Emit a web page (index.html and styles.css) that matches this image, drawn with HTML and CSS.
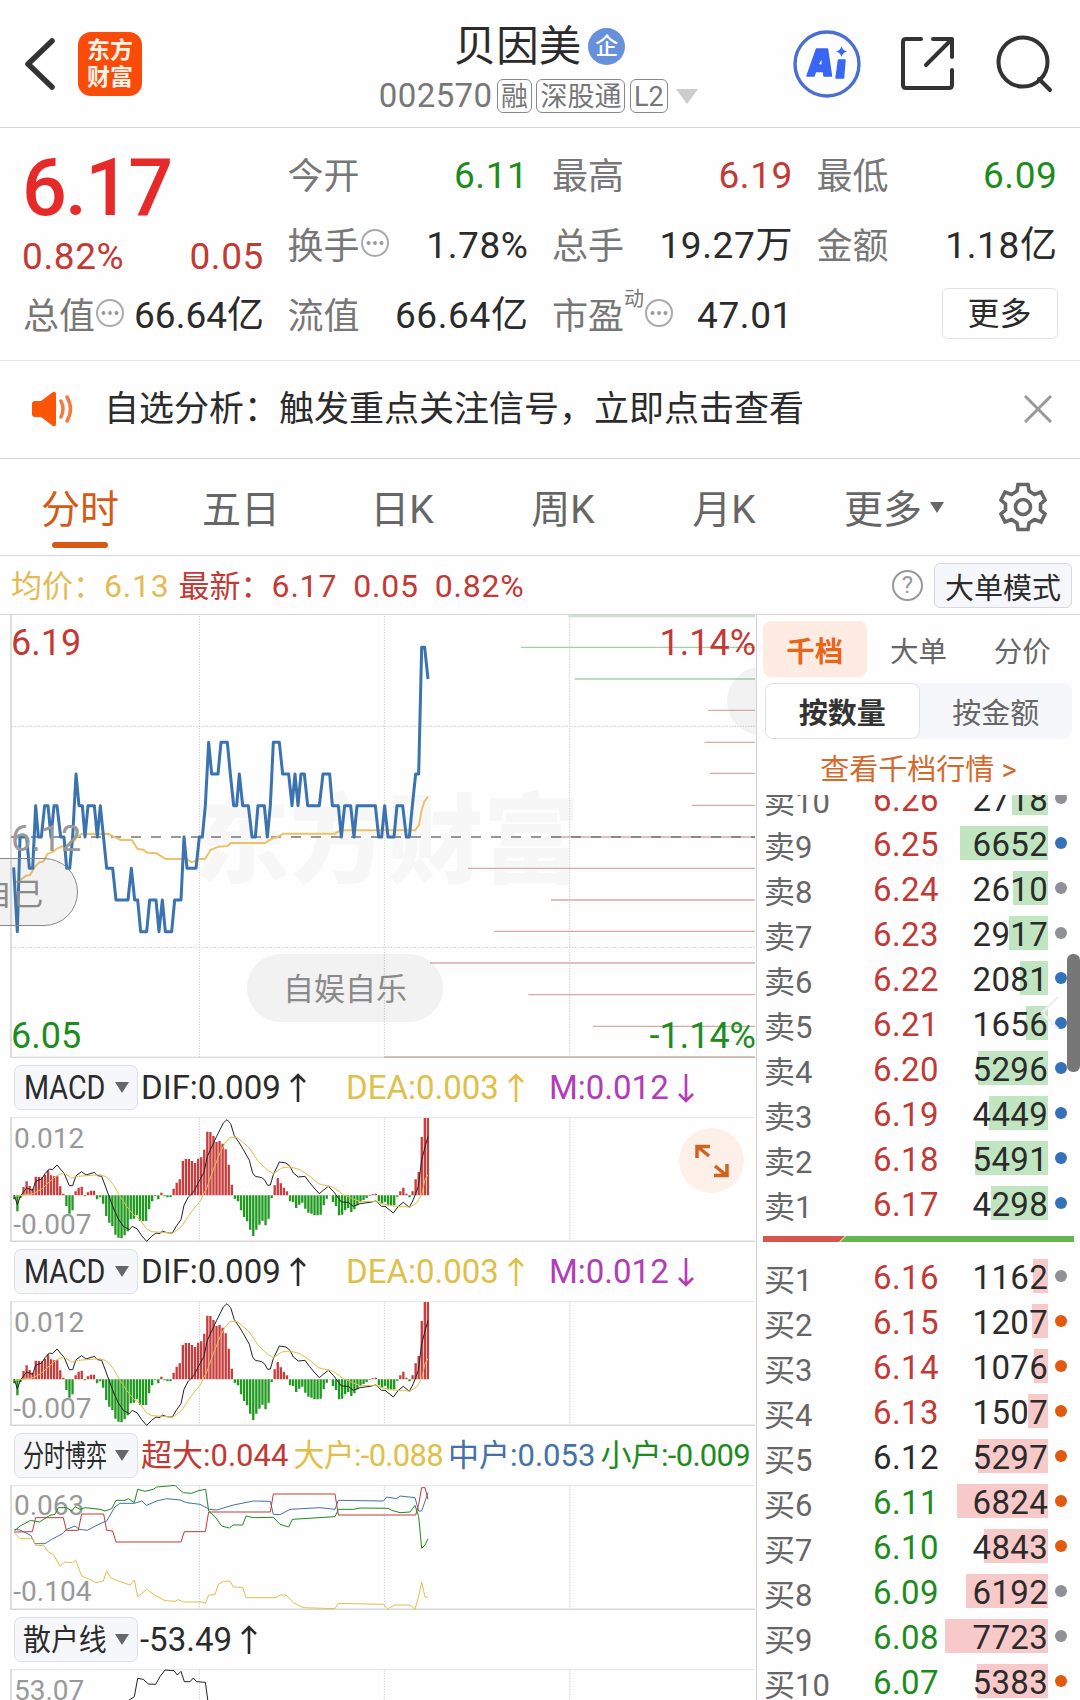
FILE: index.html
```html
<!DOCTYPE html>
<html lang="zh-CN">
<head>
    <meta charset="UTF-8">
    <meta name="viewport" content="width=device-width, initial-scale=1.0">
    <title>贝因美 002570</title>
    <link rel="stylesheet" href="styles.css">
</head>
<body>
    <header class="header">
        <div class="header-side">
            <svg class="back" width="32" height="54" viewBox="0 0 32 54"><path d="M28 4L4 27L28 50" /></svg>
            <div class="logo"><span>东方</span><span>财富</span></div>
        </div>
        <div class="header-title">
            <div class="stock-name">贝因美<span class="badge">企</span></div>
            <div class="stock-code">
                <span class="code">002570</span>
                <span class="tag">融</span>
                <span class="tag">深股通</span>
                <span class="tag">L2</span>
                <span class="tri tri-light"></span>
            </div>
        </div>
        <div class="header-side header-icons">
            <svg width="68" height="68" viewBox="0 0 68 68">
                <circle cx="34" cy="34" r="32" fill="none" stroke="#4a6fd0" stroke-width="3.4" />
                <path d="M14 46L23.500 19H34.500L38.500 46H31L30.500 41.500H22.500L21 46ZM25 35H29.500L28.800 27Z" fill="#3a66f5" fill-rule="evenodd" stroke="#3a66f5" stroke-width="1.500" stroke-linejoin="round" />
                <path d="M45.500 30H52L50.500 48H43Z" fill="#3a66f5" stroke="#3a66f5" stroke-width="1.500" stroke-linejoin="round" />
                <path d="M48.500 16Q49.500 20.500 54 21.500Q49.500 22.500 48.500 27Q47.500 22.500 43 21.500Q47.500 20.500 48.500 16Z" fill="#3a66f5" />
            </svg>
            <svg class="line-icon" width="56" height="56" viewBox="0 0 56 56">
                <path d="M21 3H6Q3 3 3 6V49Q3 52 6 52H49Q52 52 52 49V34M33 3H52V21M52 3L26 29" />
            </svg>
            <svg class="line-icon search" width="58" height="58" viewBox="0 0 58 58">
                <circle cx="27" cy="27" r="24.500" /><path d="M43 44L54 55" />
            </svg>
        </div>
    </header>

    <section class="quote">
        <div class="price">6.17</div>
        <div class="cell"><label>今开</label><b class="green">6.11</b></div>
        <div class="cell"><label>最高</label><b class="red">6.19</b></div>
        <div class="cell"><label>最低</label><b class="green">6.09</b></div>
        <div class="cell change"><b class="red">0.82%</b><b class="red">0.05</b></div>
        <div class="cell"><label>换手<i class="more-dot"></i></label><b>1.78%</b></div>
        <div class="cell"><label>总手</label><b>19.27万</b></div>
        <div class="cell"><label>金额</label><b>1.18亿</b></div>
        <div class="cell"><label>总值<i class="more-dot"></i></label><b class="tight">66.64亿</b></div>
        <div class="cell"><label>流值</label><b>66.64亿</b></div>
        <div class="cell"><label>市盈<sup>动</sup><i class="more-dot"></i></label><b>47.01</b></div>
        <div class="cell"><button class="more-btn">更多</button></div>
    </section>

    <section class="notice">
        <svg width="44" height="38" viewBox="0 0 44 38">
            <path d="M1 14Q1 11 4 11H10L22 2Q25 1 25 4V34Q25 37 22 36L10 27H4Q1 27 1 24Z" fill="#fb5607" />
            <path d="M30 11Q34 19 30 27M36 7Q43 19 36 31" fill="none" stroke="#f07b3f" stroke-width="3.500" stroke-linecap="round" />
        </svg>
        <p>自选分析：触发重点关注信号，立即点击查看</p>
        <svg class="close" width="28" height="28" viewBox="0 0 28 28"><path d="M1 1L27 27M27 1L1 27" /></svg>
    </section>

    <nav class="tabs">
        <a class="tab active">分时</a>
        <a class="tab">五日</a>
        <a class="tab">日K</a>
        <a class="tab">周K</a>
        <a class="tab">月K</a>
        <a class="tab tab-more">更多<span class="tri"></span></a>
        <span class="gear">
            <svg width="48" height="50" viewBox="0 0 48 50">
                <path d="M19 2.500H29L30 9L35.500 12.500L42 10L46 18L41.500 22V28L46 32L42 40L35.500 37.500L30 41L29 47.500H19L18 41L12.500 37.500L6 40L2 32L6.500 28V22L2 18L6 10L12.500 12.500L18 9Z" />
                <circle cx="24" cy="25" r="7.500" />
            </svg>
        </span>
    </nav>

    <section class="summary">
        <span class="avg">均价：<em>6.13</em></span>
        <span class="last">最新：<em>6.17</em><em>0.05</em><em>0.82%</em></span>
        <span class="help">?</span>
        <button class="mode-btn">大单模式</button>
    </section>

    <main class="main">
        <div class="charts">
            <div class="price-chart">
                <svg width="756" height="443" viewBox="0 15 2268 1329">
                    <text class="watermark" x="580" y="795" textLength="1160">东方财富</text>
                    <g class="grid">
                        <path d="M598 18V1342M1153 18V1342M1709 18V1342M36 349H2265M36 1012H2265" />
                    </g>
                    <path class="frame" d="M33 15V1343H2265" />
                    <g class="depth-up">
                        <path d="M1563 112H2265M1724 207H2265" />
                        <path class="thick" d="M1705 18H2265" />
                    </g>
                    <g class="depth-down">
                        <path d="M2124 301H2265M2114 397H2265M2130 490H2265M2075 586H2265M1653 681H2265M1404 775H2265M1653 870H2265M1483 964H2265M1290 1059H2265M1585 1154H2265M1779 1249H2265" />
                        <path class="thick" d="M1153 1342H2265" />
                    </g>
                    <path class="mid" d="M33 681H2265" />
                    <polyline class="line-avg" points="60,810 68,805 78,797 90,795 105,770 118,757 130,755 142,732 160,725 172,715 190,708 208,706 220,695 232,680 245,672 325,671 340,680 362,690 395,690 413,717 430,719 442,728 470,730 497,747 560,747 575,757 598,747 615,747 632,720 655,710 683,708 692,699 795,699 815,686 832,681 850,671 1005,671 1020,661 1245,661 1257,645 1265,600 1273,575 1284,560" />
                    <polyline class="line-price" points="41,772 52,965 60,681 80,681 88,775 98,775 107,587 115,681 124,681 134,587 144,587 153,681 162,587 171,587 182,681 192,681 200,775 209,775 218,681 228,492 237,587 247,587 255,681 264,587 283,587 292,681 301,587 320,775 338,775 348,870 384,870 394,775 404,870 413,870 422,965 440,965 449,870 468,870 477,965 487,870 496,965 515,965 524,870 543,870 552,681 561,775 588,775 598,681 607,681 616,587 626,397 635,492 654,492 663,397 682,397 691,492 701,587 710,587 718,492 728,587 745,587 756,681 766,681 774,587 793,587 802,681 811,587 820,397 838,397 848,492 866,492 876,587 885,492 894,587 903,492 913,492 923,587 958,587 969,492 989,492 997,587 1015,587 1024,681 1034,587 1052,587 1062,681 1071,587 1126,587 1136,681 1145,681 1154,587 1164,681 1182,681 1191,587 1208,587 1219,681 1228,681 1237,587 1247,492 1256,492 1265,112 1274,112 1284,207" />
                    <text class="axis red" x="33" y="135">6.19</text>
                    <text class="axis gray" x="33" y="722">6.12</text>
                    <text class="axis green" x="33" y="1313">6.05</text>
                    <text class="axis red end" x="2268" y="135">1.14%</text>
                    <text class="axis green end" x="2268" y="1313">-1.14%</text>
                </svg>
                <span class="bubble bubble-left">自己</span>
                <span class="bubble bubble-mid">自娱自乐</span>
                <span class="bubble bubble-right"></span>
            </div>

            <div class="indicator">
                <div class="indicator-bar">
                    <button class="select"><span class="latin">MACD</span><i class="tri"></i></button>
                    <span class="val dif">DIF:0.009<svg class="arrow" viewBox="0 0 16 30"><path d="M8 29V2M1 9L8 2L15 9" /></svg></span>
                    <span class="val dea">DEA:0.003<svg class="arrow" viewBox="0 0 16 30"><path d="M8 29V2M1 9L8 2L15 9" /></svg></span>
                    <span class="val m">M:0.012<svg class="arrow" viewBox="0 0 16 30"><path d="M8 1V28M1 21L8 28L15 21" /></svg></span>
                </div>
                <svg class="plot macd" width="756" height="125" viewBox="0 172 2268 375"></svg>
                <span class="expand">
                    <svg width="34" height="34" viewBox="0 0 34 34"><path d="M2 14V2.500H15M3 3L14 12M32 20V31.500H19M31 31L20 22" /></svg>
                </span>
            </div>

            <div class="indicator">
                <div class="indicator-bar">
                    <button class="select"><span class="latin">MACD</span><i class="tri"></i></button>
                    <span class="val dif">DIF:0.009<svg class="arrow" viewBox="0 0 16 30"><path d="M8 29V2M1 9L8 2L15 9" /></svg></span>
                    <span class="val dea">DEA:0.003<svg class="arrow" viewBox="0 0 16 30"><path d="M8 29V2M1 9L8 2L15 9" /></svg></span>
                    <span class="val m">M:0.012<svg class="arrow" viewBox="0 0 16 30"><path d="M8 1V28M1 21L8 28L15 21" /></svg></span>
                </div>
                <svg class="plot macd" width="756" height="125" viewBox="0 172 2268 375"></svg>
            </div>

            <div class="indicator">
                <div class="indicator-bar game">
                    <button class="select"><span class="four">分时博弈</span><i class="tri"></i></button>
                    <span class="red">超大:0.044</span>
                    <span class="dea minus">大户:-0.088</span>
                    <span class="blue">中户:0.053</span>
                    <span class="green minus">小户:-0.009</span>
                </div>
                <svg class="plot" width="756" height="125" viewBox="0 167 2268 375">
                    <path class="grid" d="M598 170V540M1153 170V540M1709 170V540" />
                    <path class="frame-top" d="M33 168H2265" />
                    <path class="frame" d="M33 168V540H2265" />
                    <text class="scale" x="42" y="258">0.063</text>
                    <text class="scale" x="40" y="516">-0.104</text>
                    <polyline class="thin s-blue" points="43,300 60,302 92,318 105,343 135,343 155,330 188,313 200,300 225,290 238,300 262,303 300,283 320,275 345,232 360,222 403,222 425,215 440,228 470,215 500,208 540,212 560,220 600,225 628,240 650,242 700,227 760,215 811,216 820,255 840,256 870,240 960,235 1005,240 1015,213 1150,215 1160,203 1190,208 1200,200 1245,205 1256,245 1265,245 1284,190" />
                    <polyline class="thin s-yellow" points="43,310 60,328 98,328 107,348 132,349 145,368 160,375 180,410 195,398 218,400 227,392 245,440 265,448 288,460 310,455 320,425 332,445 355,455 390,467 403,452 413,502 440,480 465,498 495,514 525,516 535,511 550,518 605,518 616,522 626,497 645,496 655,465 670,456 690,455 700,473 728,474 738,505 830,505 840,497 858,497 880,520 910,535 1005,538 1015,522 1150,525 1163,538 1185,527 1230,527 1245,540 1256,500 1265,458 1275,503 1284,504" />
                    <polyline class="thin s-red" points="43,308 97,307 107,265 190,265 199,303 235,303 245,254 311,254 320,303 338,305 348,338 543,338 553,307 616,307 626,248 811,248 820,194 1005,194 1015,257 1247,257 1256,225 1265,175 1275,175 1284,210" />
                    <polyline class="thin s-green" points="43,305 60,290 92,273 118,278 150,258 165,255 175,235 200,235 215,245 225,232 240,240 255,235 300,240 315,245 335,238 348,213 375,213 385,208 403,220 413,180 435,186 460,180 470,173 525,168 535,178 550,190 575,192 595,184 617,180 626,245 645,262 665,290 688,296 700,287 728,287 738,260 760,265 820,264 840,285 866,293 877,270 1005,262 1015,240 1060,240 1080,236 1165,237 1175,243 1200,250 1230,248 1245,228 1256,262 1265,357 1275,347 1284,328" />
                </svg>
            </div>

            <div class="indicator">
                <div class="indicator-bar">
                    <button class="select"><span class="three">散户线</span><i class="tri"></i></button>
                    <span class="val retail">-53.49<svg class="arrow" viewBox="0 0 16 30"><path d="M8 29V2M1 9L8 2L15 9" /></svg></span>
                </div>
                <svg class="plot" width="756" height="125" viewBox="0 717 2268 375">
                    <path class="grid" d="M598 720V1090M1153 720V1090M1709 720V1090" />
                    <path class="frame-top" d="M33 718H2265" />
                    <path class="frame" d="M33 718V1090H2265" />
                    <polyline class="thin s-black" points="380,815 403,800 413,745 430,748 445,762 467,763 480,740 495,720 522,722 532,735 543,724 553,755 570,755 580,744 590,755 616,757 624,815" />
                    <text class="scale" x="42" y="811">53.07</text>
                </svg>
            </div>
        </div>

        <aside class="book">
            <div class="book-tabs">
                <a class="active">千档</a>
                <a>大单</a>
                <a>分价</a>
            </div>
            <div class="segment">
                <a class="active">按数量</a>
                <a>按金额</a>
            </div>
            <a class="book-link">查看千档行情 &gt;</a>
            <div class="book-list">
                <div id="sell"></div>
                <svg class="ratio" width="311" height="6" viewBox="0 0 311 6">
                    <path d="M0 0H82L76 6H0Z" fill="#d9534f" />
                    <path d="M83 0H311V6H77Z" fill="#65b550" />
                </svg>
                <div id="buy"></div>
            </div>
            <svg class="chevron" width="20" height="36" viewBox="0 0 20 36"><path d="M18 2L2 18L18 34" /></svg>
            <span class="thumb"></span>
        </aside>
    </main>
    <script src="charts.js"></script>
</body>
</html>
```

FILE: styles.css
```css
* {
    box-sizing: border-box;
}
body {
    margin: 0;
    width: 1080px;
    height: 1700px;
    overflow: hidden;
    background-color: #fefefe;
    color: #2b2b2b;
    font-family: Roboto, "Noto Sans CJK SC", sans-serif;
    line-height: 1.2;
}
button {
    font-family: inherit;
    color: inherit;
    padding: 0;
}
b, em, i {
    font-weight: normal;
    font-style: normal;
}
.red { color: #c23a35; fill: #c23a35; }
.green { color: #1d8c1d; fill: #1d8c1d; }
.blue { color: #4472a4; }
.tri {
    display: inline-block;
    border: 7px solid transparent;
    border-top: 11px solid #666;
    border-bottom: 0;
}

/* header */
.header {
    display: flex;
    justify-content: space-between;
    height: 128px;
    border-bottom: 1px solid #d2d2d2;
    padding: 0 26px 0 24px;
}
.header-side {
    display: flex;
    align-items: center;
    width: 300px;
}
.header-icons {
    justify-content: flex-end;
    gap: 39px;
}
.search {
    margin-left: 1px;
}
.back {
    fill: none;
    stroke: #333;
    stroke-width: 5.500;
    stroke-linecap: round;
    stroke-linejoin: round;
}
.logo {
    display: flex;
    flex-direction: column;
    justify-content: center;
    width: 64px;
    height: 64px;
    margin-left: 22px;
    border-radius: 13px;
    background-color: #fa4b08;
    color: #fff3ea;
    font-size: 23px;
    font-weight: 700;
    line-height: 27px;
    text-align: center;
}
.header-title {
    display: flex;
    flex-direction: column;
    align-items: center;
    padding-top: 21px;
}
.stock-name {
    display: flex;
    align-items: center;
    height: 50px;
    padding-left: 1px;
    font-size: 42.500px;
}
.badge {
    width: 37px;
    height: 37px;
    margin-left: 7px;
    border-radius: 50%;
    background-color: #668fdc;
    color: #fff;
    font-size: 23px;
    font-weight: 500;
    line-height: 38px;
    text-align: center;
}
.stock-code {
    display: flex;
    align-items: center;
    gap: 4.500px;
    height: 50px;
    margin-left: -1px;
    color: #777;
}
.code {
    font-size: 33px;
    letter-spacing: 0.4px;
}
.tag {
    height: 34px;
    padding: 0 3px;
    border: 1.500px solid #888;
    border-radius: 6px;
    font-size: 27px;
    line-height: 34px;
}
.tri-light {
    margin-left: 4px;
    border-width: 11px;
    border-top: 15px solid #ccc;
    border-bottom: 0;
}
.line-icon {
    fill: none;
    stroke: #333;
    stroke-width: 4;
    stroke-linecap: round;
    stroke-linejoin: round;
}

/* quote */
.quote {
    display: grid;
    grid-template-columns: repeat(4, 241px);
    grid-template-rows: 70px 70px 70px;
    column-gap: 23.500px;
    height: 233px;
    padding: 13px 0 0 23px;
    border-bottom: 1px solid #e6e6e6;
}
.price {
    color: #e62a2a;
    font-size: 79px;
    font-weight: 500;
    line-height: 94px;
    margin-left: -1px;
    letter-spacing: -1.800px;
}
.cell {
    display: flex;
    justify-content: space-between;
    align-items: center;
    white-space: nowrap;
    font-size: 37px;
}
.cell b {
    letter-spacing: 0.6px;
}
.cell .tight {
    letter-spacing: 0;
}
.cell label {
    display: flex;
    align-items: center;
    padding-top: 3px;
    color: #777;
    font-size: 36px;
}
.cell sup {
    align-self: flex-start;
    margin-top: -7px;
    font-size: 20px;
    line-height: 20px;
}
.change {
    padding-top: 22px;
}
.change b {
    margin-left: -1px;
}
.more-dot {
    width: 28px;
    height: 28px;
    margin-left: 1px;
    margin-top: -9px;
    border: 2px solid #aaa;
    border-radius: 50%;
    background: radial-gradient(circle, #999 1.600px, transparent 2.200px) 50% 50% / 6.500px 24px repeat-x content-box;
    padding: 0 2px;
}
.more-btn {
    width: 116px;
    height: 51px;
    margin: -5px 0 0 auto;
    border: 1.500px solid #e2e2e2;
    border-radius: 6px;
    background-color: #fff;
    font-size: 32px;
    line-height: 50px;
}

/* notice */
.notice {
    display: flex;
    align-items: center;
    height: 98px;
    padding: 0 28px 2px 31px;
    border-bottom: 1px solid #d6d6d6;
}
.notice p {
    flex: 1;
    margin: 3px 0 0 29px;
    font-size: 35px;
}
.close {
    fill: none;
    stroke: #999;
    stroke-width: 3;
}

/* tabs */
.tabs {
    display: flex;
    height: 97px;
    border-bottom: 1px solid #d6d6d6;
    color: #666;
    font-size: 39px;
}
.tab {
    position: relative;
    width: 161px;
    padding-right: 1px;
    line-height: 102px;
    text-align: center;
}
.tab.active {
    color: #d45a16;
}
.tab.active::after {
    content: "";
    position: absolute;
    left: 52px;
    bottom: 7px;
    width: 56px;
    height: 6px;
    border-radius: 3px;
    background-color: #d45a16;
}
.tab-more {
    width: 178px;
    padding: 0;
}
.tab-more .tri {
    margin: 0 0 10px 8px;
}
.gear {
    display: flex;
    align-items: center;
    margin-left: 16px;
}
.gear svg {
    fill: none;
    stroke: #666;
    stroke-width: 3.600;
}

/* summary */
.summary {
    display: flex;
    align-items: center;
    height: 59px;
    padding: 0 8px 0 11px;
    border-bottom: 1px solid #d6d6d6;
    font-size: 31px;
}
.avg, .last {
    padding-top: 2px;
}
.summary em {
    font-size: 32px;
    letter-spacing: 0.8px;
}
.summary em + em {
    margin-left: 16px;
}
.avg {
    color: #e3bb55;
}
.last {
    margin-left: 9px;
    color: #c23a35;
}
.help {
    width: 31px;
    height: 31px;
    margin-left: auto;
    border: 2.500px solid #999;
    border-radius: 50%;
    color: #999;
    font-size: 24px;
    line-height: 27px;
    text-align: center;
}
.mode-btn {
    width: 138px;
    height: 45px;
    margin-left: 11px;
    border: 1px solid #d5d8e0;
    border-radius: 6px;
    background-color: #f6f7fa;
    font-size: 29px;
    line-height: 51px;
}

/* charts */
.main {
    display: flex;
    height: 1085px;
}
.charts {
    width: 757px;
    height: 1085px;
    overflow: hidden;
    border-right: 1px solid #d2d2d2;
}
.charts svg {
    display: block;
}
.price-chart {
    position: relative;
    height: 443px;
    overflow: hidden;
}
.grid {
    fill: none;
    stroke: #ccc;
    stroke-width: 3;
    stroke-dasharray: 4 4;
}
.frame {
    fill: none;
    stroke: #d8d8d8;
    stroke-width: 5;
}
.frame-top {
    stroke: #e2e2e2;
    stroke-width: 3;
}
.depth-up {
    stroke: #a9cfaa;
    stroke-width: 4;
}
.depth-down {
    stroke: #d8aaa7;
    stroke-width: 4;
}
.depth-up .thick {
    stroke: #cfe0cf;
    stroke-width: 7;
}
.depth-down .thick {
    stroke: #cdb5b3;
    stroke-width: 6;
}
.mid {
    stroke: #777;
    stroke-width: 5;
    stroke-dasharray: 30 30;
}
.line-price {
    fill: none;
    stroke: #3a73b0;
    stroke-width: 9;
    stroke-linejoin: round;
}
.line-avg {
    fill: none;
    stroke: #ecc268;
    stroke-width: 6;
}
.watermark {
    fill: #f7f7f7;
    font-size: 290px;
    font-weight: 900;
}
.axis {
    font-size: 108px;
}
.axis.gray {
    fill: #999;
}
.end {
    text-anchor: end;
}
.bubble {
    position: absolute;
    height: 68px;
    border-radius: 34px;
    background-color: rgba(120, 120, 120, 0.09);
    color: #8a8a8a;
    font-size: 31px;
    line-height: 71px;
    text-align: center;
}
.bubble-left {
    left: -60px;
    top: 243px;
    width: 138px;
    padding-right: 34px;
    border: 1px solid #888;
    text-align: right;
}
.bubble-mid {
    left: 247px;
    top: 339px;
    width: 196px;
}
.bubble-right {
    left: 727px;
    top: 52px;
    width: 120px;
}

/* indicators */
.indicator {
    position: relative;
    height: 184px;
}
.indicator-bar {
    display: flex;
    align-items: center;
    height: 59px;
    padding-left: 14px;
    font-size: 33px;
    white-space: nowrap;
}
.select {
    display: flex;
    flex-shrink: 0;
    align-items: center;
    justify-content: space-between;
    width: 124px;
    height: 45px;
    margin-right: 3px;
    padding: 0 8px 0 9px;
    border: 1px solid #dcdfe6;
    border-radius: 7px;
    background-color: #f6f7fa;
    font-size: 33px;
}
.select span {
    width: 83px;
    line-height: 43px;
    text-align: left;
    transform-origin: left;
}
.select .tri {
    flex-shrink: 0;
}
.select .latin {
    transform: scaleX(0.87);
}
.select .four {
    margin-left: -1px;
    font-size: 30px;
    transform: scaleX(0.7);
}
.select .three {
    margin-left: -1px;
    font-size: 30px;
    transform: scaleX(0.93);
}
.val {
    display: flex;
    align-items: center;
    width: 203px;
}
.dif {
    width: 205px;
}
.retail {
    margin-left: -1px;
}
.arrow {
    width: 16px;
    height: 30px;
    margin-left: 9px;
    fill: none;
    stroke: currentColor;
    stroke-width: 2.600;
}
.dea {
    color: #dfc04a;
}
.m {
    color: #b13bb8;
}
.game {
    gap: 5px;
    font-size: 31px;
}
.game .select {
    margin-right: -2px;
}
.minus {
    letter-spacing: -0.7px;
}
.scale {
    fill: #999;
    font-size: 84px;
}
.thin {
    fill: none;
    stroke-width: 3;
}
.s-red { stroke: #c23a35; }
.s-green { stroke: #1d8c1d; }
.s-blue { stroke: #4472a4; }
.s-yellow { stroke: #dfc04a; }
.s-black { stroke: #222; }
.bar-up {
    stroke: #c83c3c;
    stroke-width: 7;
}
.bar-down {
    stroke: #1f9a1f;
    stroke-width: 7;
}
.expand {
    position: absolute;
    left: 679px;
    top: 70px;
    display: flex;
    align-items: center;
    justify-content: center;
    width: 65px;
    height: 65px;
    border-radius: 50%;
    background-color: #fdf0e8;
}
.expand svg {
    fill: none;
    stroke: #d2621f;
    stroke-width: 3.500;
}

/* order book */
.book {
    position: relative;
    width: 323px;
    padding: 6px 6px 0;
    overflow: hidden;
}
.book-tabs {
    display: flex;
    height: 56px;
    color: #666;
    font-size: 28.500px;
    line-height: 64px;
    text-align: center;
}
.book-tabs a {
    width: 104px;
}
.book-tabs .active {
    border-radius: 8px;
    background-color: #feece2;
    color: #e8651a;
    font-weight: 700;
}
.segment {
    display: flex;
    height: 56px;
    margin: 6px 2px 0;
    border-radius: 8px;
    background-color: #f6f7fa;
    color: #666;
    font-size: 29px;
    line-height: 63px;
    text-align: center;
}
.segment a {
    flex: 1;
}
.segment .active {
    border: 1px solid #e2e2e6;
    border-radius: 8px;
    background-color: #fff;
    color: #333;
    font-weight: 700;
    line-height: 61px;
}
.book-link {
    display: block;
    height: 56px;
    color: #d4692c;
    font-size: 29px;
    line-height: 63px;
    text-align: center;
}
.book-list {
    height: 905px;
    overflow: hidden;
}
#sell {
    margin-top: -20px;
}
.row {
    display: flex;
    align-items: center;
    height: 45px;
    padding-left: 1px;
}
.row .name {
    width: 109px;
    padding-top: 11px;
    color: #666;
    font-size: 31px;
}
.row .rate {
    width: 75px;
    padding-top: 5px;
    font-size: 33px;
    letter-spacing: 0.4px;
}
.row .qty {
    display: flex;
    justify-content: flex-end;
    align-items: center;
    position: relative;
    width: 100px;
    height: 34px;
    padding-top: 5px;
    font-size: 33px;
    letter-spacing: 0.3px;
}
.row .bar {
    position: absolute;
    right: 0;
    top: 0;
    z-index: -1;
    height: 34px;
}
#sell .bar {
    background-color: #c0e5c0;
}
#buy .bar {
    background-color: #f8c9c9;
}
.dot {
    width: 12px;
    height: 12px;
    margin: 0 0 0 7px;
    border-radius: 50%;
    background-color: #909098;
}
.dot.big-sell {
    background-color: #3471b8;
}
.dot.big-buy {
    background-color: #e05a10;
}
.ratio {
    display: block;
    margin: 11px 0;
}
.chevron {
    position: absolute;
    left: 283px;
    top: 380px;
    fill: none;
    stroke: rgba(240, 240, 240, 0.9);
    stroke-width: 3;
}
.thumb {
    position: absolute;
    right: 0;
    top: 339px;
    width: 13px;
    height: 118px;
    border-radius: 6px;
    background-color: #777;
}
```

FILE: charts.js
```javascript
// MACD histogram, one value per minute
var hist = [-12, -48, -8, 25, 42, 28, 20, 56, 55, 54, 62, 75, 60, 57, 57, 27, 5, -32, -55, -45,
    12, 23, 26, -3, 9, 14, 14, -12, -6, -25, -62, -82, -92, -118, -127, -129, -120, -108, -72, -70,
    -60, -77, -77, -77, -42, -18, -2, -12, 8, -3, -6, -6, 20, 38, 48, 103, 109, 109, 103, 97,
    110, 114, 137, 191, 190, 178, 160, 163, 155, 138, 92, 32, -10, -18, -45, -65, -78, -103, -122, -103,
    -88, -76, -90, -70, -8, 30, 52, 36, 23, 12, -18, -20, -38, -28, -22, -40, -52, -55, -60, -60,
    -58, -30, -10, 1, -20, -32, -60, -58, -45, -38, -50, -42, -30, -20, -14, -8, -2, 3, 5, -18,
    -26, -20, -30, -30, -30, -4, 12, 23, 5, -6, 12, 48, 70, 175, 232, 232];

var dif = '43,407 52,435 62,408 80,385 98,392 107,365 125,358 135,342 148,328 158,330 171,316 181,328 192,340 208,378 218,378 228,348 245,336 258,346 283,338 292,348 305,350 318,385 328,412 340,445 355,478 370,500 388,510 397,500 412,508 425,528 440,545 455,530 468,520 480,522 487,514 500,519 517,520 530,498 543,480 552,437 565,412 580,398 600,360 612,338 622,290 635,262 650,230 660,210 670,190 681,180 692,192 703,228 718,250 730,270 748,302 758,340 766,350 785,354 793,360 803,377 811,376 820,345 838,307 858,310 870,320 880,340 895,352 915,350 928,368 945,388 958,402 972,390 985,380 1000,395 1010,408 1024,427 1045,428 1060,440 1080,432 1110,428 1128,424 1145,440 1155,440 1180,460 1195,440 1210,428 1228,443 1240,420 1255,380 1265,300 1284,230';
var dea = '43,410 100,402 125,388 150,365 170,348 192,340 215,355 235,350 300,345 320,352 340,375 360,410 380,440 400,465 420,480 440,508 455,516 520,520 545,500 575,455 600,425 620,385 640,330 660,280 675,250 690,233 710,233 730,248 750,268 775,305 800,330 820,342 845,325 870,322 900,330 930,350 955,372 1000,383 1030,405 1060,418 1080,426 1125,425 1150,433 1185,440 1230,442 1250,430 1265,405 1275,360 1284,345';

function drawMacd(svg) {
    var up = '';
    var down = '';
    hist.forEach(function(v, i) {
        var bar = 'M' + (43 + i * 9.19).toFixed(1) + ' 407v' + (-v);
        if (v > 0) {
            up += bar;
        } else {
            down += bar;
        }
    });
    svg.innerHTML =
        '<path class="grid" d="M598 175V545M1153 175V545M1709 175V545"/>' +
        '<path class="frame-top" d="M33 173H2265"/>' +
        '<path class="frame" d="M33 173V545H2265"/>' +
        '<path class="bar-up" d="' + up + '"/>' +
        '<path class="bar-down" d="' + down + '"/>' +
        '<polyline class="thin s-black" points="' + dif + '"/>' +
        '<polyline class="thin s-yellow" points="' + dea + '"/>' +
        '<text class="scale" x="42" y="264">0.012</text>' +
        '<text class="scale" x="40" y="522">-0.007</text>';
}

document.querySelectorAll('.macd').forEach(drawMacd);

// name, price, quantity, price colour, marked as a big order
var sell = [
    ['卖10', '6.26', 2718, 'red', 0],
    ['卖9', '6.25', 6652, 'red', 1],
    ['卖8', '6.24', 2610, 'red', 0],
    ['卖7', '6.23', 2917, 'red', 0],
    ['卖6', '6.22', 2081, 'red', 1],
    ['卖5', '6.21', 1656, 'red', 1],
    ['卖4', '6.20', 5296, 'red', 1],
    ['卖3', '6.19', 4449, 'red', 1],
    ['卖2', '6.18', 5491, 'red', 1],
    ['卖1', '6.17', 4298, 'red', 1]
];
var buy = [
    ['买1', '6.16', 1162, 'red', 0],
    ['买2', '6.15', 1207, 'red', 1],
    ['买3', '6.14', 1076, 'red', 1],
    ['买4', '6.13', 1507, 'red', 1],
    ['买5', '6.12', 5297, '', 1],
    ['买6', '6.11', 6824, 'green', 1],
    ['买7', '6.10', 4843, 'green', 1],
    ['买8', '6.09', 6192, 'green', 0],
    ['买9', '6.08', 7723, 'green', 0],
    ['买10', '6.07', 5383, 'green', 1]
];

function fillBook(id, rows) {
    document.getElementById(id).innerHTML = rows.map(function(r) {
        return '<div class="row">' +
            '<span class="name">' + r[0] + '</span>' +
            '<span class="rate ' + r[3] + '">' + r[1] + '</span>' +
            '<span class="qty"><i class="bar" style="width:' + Math.round(r[2] / 75.3) + 'px"></i>' + r[2] + '</span>' +
            '<span class="dot' + (r[4] ? ' big-' + id : '') + '"></span>' +
            '</div>';
    }).join('');
}

fillBook('sell', sell);
fillBook('buy', buy);
```
